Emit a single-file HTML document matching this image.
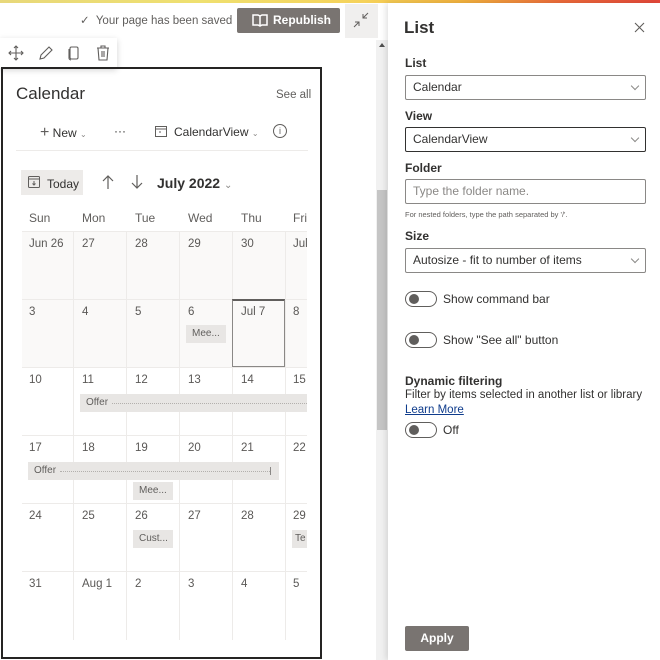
<!DOCTYPE html>
<html><head><meta charset="utf-8">
<style>
*{box-sizing:border-box;margin:0;padding:0}
body{width:660px;height:660px;overflow:hidden;background:#fff;font-family:"Liberation Sans",sans-serif;color:#323130;position:relative}
.a{position:absolute}
.t{font-size:12px;color:#605e5c}
.d{position:absolute;font-size:11.5px;color:#5a5856}
.vl{position:absolute;width:1px;background:#edebe9}
.hl{position:absolute;height:1px;background:#edebe9;left:22px;width:285px}
.ev{position:absolute;background:#e8e6e4;font-size:10px;color:#605e5c;height:18px;line-height:18px;padding-left:6px}
.lab{position:absolute;left:405px;font-size:12px;font-weight:bold;color:#323130}
.inp{position:absolute;left:405px;width:241px;height:25px;border:1px solid #8a8886;border-radius:2px;font-size:12px;line-height:23px;padding-left:7px;color:#323130}
.chev{position:absolute;right:7px;top:7px;width:6px;height:6px;border-right:1px solid #8a8886;border-bottom:1px solid #8a8886;transform:rotate(45deg)}
.tog{position:absolute;left:405px;width:32px;height:16px;border:1px solid #605e5c;border-radius:9px}
.tog:after{content:"";position:absolute;left:3px;top:2px;width:10px;height:10px;border-radius:50%;background:#605e5c}
.dash{position:absolute;top:9px;border-top:1px dotted #b3b0ad}
</style></head><body>
<div class="a" style="left:0;top:0;width:660px;height:3px;background:linear-gradient(90deg,#e8d87a 0%,#efe070 30%,#f5d25a 55%,#f2b23e 70%,#ec6a3a 85%,#e4473a 100%)"></div>

<div class="a" style="left:80px;top:13px;font-size:11.5px;color:#605e5c">✓&nbsp; Your page has been saved</div>
<div class="a" style="left:237px;top:8px;width:103px;height:25px;background:#797471;border-radius:2px;color:#fff;font-size:12px;font-weight:bold;line-height:25px;padding-left:36px">Republish</div>
<svg class="a" style="left:252px;top:13px" width="16" height="14" viewBox="0 0 16 14"><path d="M1 2h5l2 1 2-1h5v10h-5l-2 1-2-1H1z M8 3v10" fill="none" stroke="#fff" stroke-width="1.5"/></svg>
<div class="a" style="left:345px;top:4px;width:33px;height:34px;background:#f0efee"></div>
<svg class="a" style="left:353px;top:12px" width="16" height="16" viewBox="0 0 16 16"><path d="M10 2v4h4M10 6l5-5M6 14v-4H2M6 10l-5 5" fill="none" stroke="#605e5c" stroke-width="1"/></svg>

<div class="a" style="left:376px;top:40px;width:12px;height:620px;background:#f1f1f1"></div>
<div class="a" style="left:377px;top:190px;width:10px;height:240px;background:#c5c5c5"></div>
<div class="a" style="left:379px;top:43px;width:0;height:0;border-left:3px solid transparent;border-right:3px solid transparent;border-bottom:4px solid #505050"></div>

<div class="a" style="left:0;top:38px;width:117px;height:30px;background:#fff;box-shadow:0 2px 6px rgba(0,0,0,.18)"></div>
<svg class="a" style="left:7px;top:44px" width="110" height="18" viewBox="0 0 110 18">
<g fill="none" stroke="#605e5c" stroke-width="1.1">
<path d="M9 2v14M2 9h14M7 4l2-2 2 2M7 14l2 2 2-2M4 7l-2 2 2 2M14 7l2 2-2 2"/>
<path d="M33 15l1-4 8-8 3 3-8 8z"/>
<rect x="63" y="3" width="8" height="12" rx="1.5"/><path d="M62 5v9a2 2 0 0 0 2 2"/>
<path d="M90 4h12M94 4V2h4v2M91 4l1 12h8l1-12M95 7v6M97 7v6"/>
</g></svg>

<div class="a" style="left:1px;top:67px;width:321px;height:592px;border:2px solid #252423"></div>
<div class="a" style="left:16px;top:84px;font-size:17px;color:#323130">Calendar</div>
<div class="a" style="left:276px;top:89px;font-size:11.5px;color:#605e5c">See all</div>
<div class="a" style="left:40px;top:124px;font-size:12px;color:#323130"><span style="font-size:16px;color:#605e5c">+</span> New <span style="color:#8a8886;font-size:8px">&#8964;</span></div>
<div class="a" style="left:114px;top:124px;font-size:12px;color:#323130">···</div>
<svg class="a" style="left:155px;top:125px" width="12" height="12"><rect x=".5" y="1.5" width="11" height="10" fill="none" stroke="#605e5c"/><path d="M1 4h10M4 7h2" stroke="#605e5c"/></svg>
<div class="a" style="left:174px;top:125px;font-size:12px;color:#323130">CalendarView <span style="color:#8a8886;font-size:8px">&#8964;</span></div>
<div class="a" style="left:273px;top:124px;width:14px;height:14px;border:1px solid #605e5c;border-radius:50%;font-size:9px;text-align:center;line-height:12px;color:#605e5c">i</div>
<div class="a" style="left:16px;top:150px;width:292px;height:1px;background:#edebe9"></div>

<div class="a" style="left:21px;top:170px;width:62px;height:25px;background:#edebe9"></div>
<svg class="a" style="left:28px;top:176px" width="12" height="12"><rect x=".5" y=".5" width="11" height="11" rx="1" fill="none" stroke="#605e5c"/><path d="M1 3h10M6 5v4M4.5 7.5l1.5 1.5 1.5-1.5" fill="none" stroke="#605e5c"/></svg>
<div class="a" style="left:47px;top:177px;font-size:12px;color:#323130">Today</div>
<svg class="a" style="left:100px;top:174px" width="50" height="16"><path d="M8 2v13M3 7l5-5 5 5M37 1v13M32 9l5 5 5-5" fill="none" stroke="#605e5c" stroke-width="1.2"/></svg>
<div class="a" style="left:157px;top:175px;font-size:14px;font-weight:bold;color:#323130">July 2022 <span style="font-weight:normal;color:#8a8886;font-size:10px">&#8964;</span></div>

<div class="t a" style="left:29px;top:211px">Sun</div>
<div class="t a" style="left:82px;top:211px">Mon</div>
<div class="t a" style="left:135px;top:211px">Tue</div>
<div class="t a" style="left:188px;top:211px">Wed</div>
<div class="t a" style="left:241px;top:211px">Thu</div>
<div class="t a" style="left:293px;top:211px">Fri</div>

<div class="a" style="left:22px;top:231px;width:285px;height:136px;background:#faf9f8"></div>
<div class="hl" style="top:231px"></div><div class="hl" style="top:299px"></div><div class="hl" style="top:367px"></div><div class="hl" style="top:435px"></div><div class="hl" style="top:503px"></div><div class="hl" style="top:571px"></div>
<div class="vl" style="left:73px;top:231px;height:409px"></div>
<div class="vl" style="left:126px;top:231px;height:409px"></div>
<div class="vl" style="left:179px;top:231px;height:409px"></div>
<div class="vl" style="left:232px;top:231px;height:409px"></div>
<div class="vl" style="left:285px;top:231px;height:409px"></div>

<div class="a" style="left:232px;top:299px;width:53px;height:68px;border:1px solid #8a8886;border-top:2px solid #605e5c;background:#faf9f8"></div>

<div class="d" style="left:29px;top:238px">Jun 26</div><div class="d" style="left:82px;top:238px">27</div><div class="d" style="left:135px;top:238px">28</div><div class="d" style="left:188px;top:238px">29</div><div class="d" style="left:241px;top:238px">30</div><div class="d" style="left:293px;top:238px">Jul</div>
<div class="d" style="left:29px;top:306px">3</div><div class="d" style="left:82px;top:306px">4</div><div class="d" style="left:135px;top:306px">5</div><div class="d" style="left:188px;top:306px">6</div><div class="d" style="left:241px;top:306px">Jul 7</div><div class="d" style="left:293px;top:306px">8</div>
<div class="d" style="left:29px;top:374px">10</div><div class="d" style="left:82px;top:374px">11</div><div class="d" style="left:135px;top:374px">12</div><div class="d" style="left:188px;top:374px">13</div><div class="d" style="left:241px;top:374px">14</div><div class="d" style="left:293px;top:374px">15</div>
<div class="d" style="left:29px;top:442px">17</div><div class="d" style="left:82px;top:442px">18</div><div class="d" style="left:135px;top:442px">19</div><div class="d" style="left:188px;top:442px">20</div><div class="d" style="left:241px;top:442px">21</div><div class="d" style="left:293px;top:442px">22</div>
<div class="d" style="left:29px;top:510px">24</div><div class="d" style="left:82px;top:510px">25</div><div class="d" style="left:135px;top:510px">26</div><div class="d" style="left:188px;top:510px">27</div><div class="d" style="left:241px;top:510px">28</div><div class="d" style="left:293px;top:510px">29</div>
<div class="d" style="left:29px;top:578px">31</div><div class="d" style="left:82px;top:578px">Aug 1</div><div class="d" style="left:135px;top:578px">2</div><div class="d" style="left:188px;top:578px">3</div><div class="d" style="left:241px;top:578px">4</div><div class="d" style="left:293px;top:578px">5</div>

<div class="ev" style="left:186px;top:325px;width:40px">Mee...</div>
<div class="ev" style="left:80px;top:394px;width:227px">Offer <span class="dash" style="left:32px;width:195px"></span></div>
<div class="ev" style="left:28px;top:462px;width:251px">Offer <span class="dash" style="left:32px;width:210px"></span><span class="a" style="left:242px;top:5px;width:1px;height:8px;background:#8a8886"></span></div>
<div class="ev" style="left:133px;top:482px;width:40px">Mee...</div>
<div class="ev" style="left:133px;top:530px;width:40px">Cust...</div>
<div class="ev" style="left:292px;top:530px;width:15px;padding-left:3px;overflow:hidden">Te</div>

<div class="a" style="left:388px;top:3px;width:272px;height:657px;background:#fff;box-shadow:-2px 0 6px rgba(0,0,0,.12)"></div>
<div class="a" style="left:404px;top:18px;font-size:17px;font-weight:bold;color:#323130">List</div>
<svg class="a" style="left:634px;top:22px" width="11" height="11"><path d="M1 1l9 9M10 1l-9 9" stroke="#605e5c" stroke-width="1.1"/></svg>
<div class="lab" style="top:56px">List</div>
<div class="inp" style="top:75px">Calendar<div class="chev"></div></div>
<div class="lab" style="top:109px">View</div>
<div class="inp" style="top:127px;border-color:#323130">CalendarView<div class="chev"></div></div>
<div class="lab" style="top:161px">Folder</div>
<div class="inp" style="top:179px;color:#8a8886">Type the folder name.</div>
<div class="a" style="left:405px;top:210px;font-size:7.5px;color:#605e5c">For nested folders, type the path separated by '/'.</div>
<div class="lab" style="top:229px">Size</div>
<div class="inp" style="top:248px">Autosize - fit to number of items<div class="chev"></div></div>
<div class="tog" style="top:291px"></div><div class="a" style="left:443px;top:292px;font-size:12px;color:#323130">Show command bar</div>
<div class="tog" style="top:332px"></div><div class="a" style="left:443px;top:333px;font-size:12px;color:#323130">Show "See all" button</div>
<div class="lab" style="top:374px">Dynamic filtering</div>
<div class="a" style="left:405px;top:389px;font-size:11.5px;color:#323130">Filter by items selected in another list or library</div>
<div class="a" style="left:405px;top:404px;font-size:11.5px;color:#0f3c8c;text-decoration:underline">Learn More</div>
<div class="tog" style="top:422px"></div><div class="a" style="left:443px;top:423px;font-size:12px;color:#323130">Off</div>
<div class="a" style="left:405px;top:626px;width:64px;height:25px;background:#797471;border-radius:2px;color:#fff;font-size:12px;font-weight:bold;text-align:center;line-height:25px">Apply</div>
</body></html>
